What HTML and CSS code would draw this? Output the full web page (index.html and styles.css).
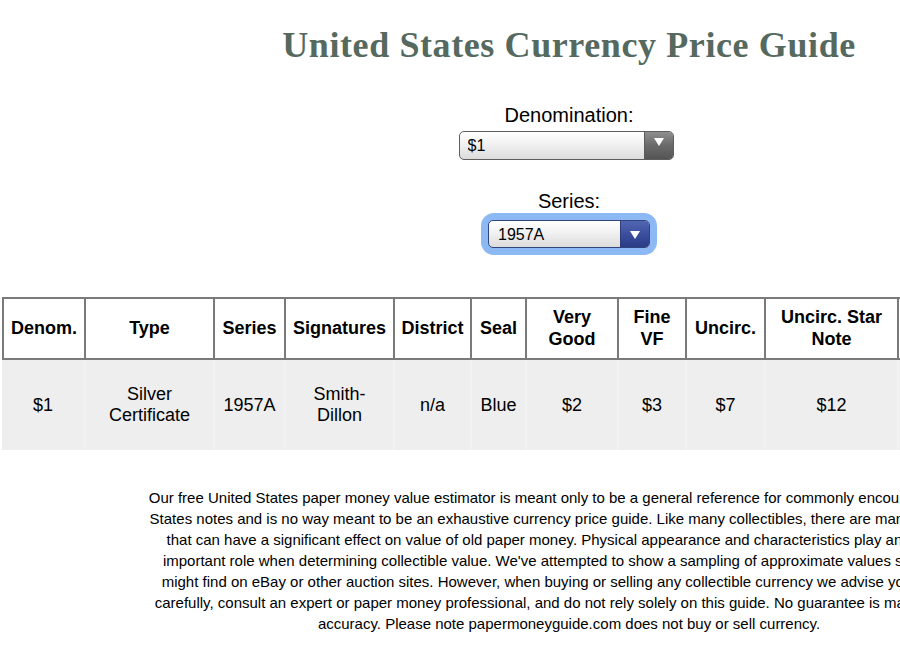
FILE: index.html
```html
<!DOCTYPE html>
<html lang="en">
<head>
<meta charset="utf-8">
<title>United States Currency Price Guide</title>
<link rel="stylesheet" href="styles.css">
</head>
<body>
<div class="page">
  <h1 class="title">United States Currency Price Guide</h1>

  <form class="filters">
    <div class="field field-first">
      <label class="field-label" for="denom">Denomination:</label>
      <div class="select select-gray">
        <select id="denom" class="select-input select-input-wide">
          <option>$1</option>
          <option>$2</option>
          <option>$5</option>
          <option>$10</option>
          <option>$20</option>
        </select>
        <span class="select-btn"><svg width="10" height="8" viewBox="0 0 10 8"><polygon points="0,0 10,0 5,8" fill="#fff"/></svg></span>
      </div>
    </div>
    <div class="field field-second">
      <label class="field-label" for="series">Series:</label>
      <div class="select select-blue">
        <select id="series" class="select-input select-input-narrow">
          <option>1957A</option>
          <option>1957</option>
          <option>1957B</option>
        </select>
        <span class="select-btn"><svg width="10" height="8" viewBox="0 0 10 8"><polygon points="0,0 10,0 5,8" fill="#fff"/></svg></span>
      </div>
    </div>
  </form>

  <table class="prices">
    <colgroup>
      <col class="c1"><col class="c2"><col class="c3"><col class="c4"><col class="c5">
      <col class="c6"><col class="c7"><col class="c8"><col class="c9"><col class="c10"><col class="c11">
    </colgroup>
    <thead>
      <tr>
        <th class="first">Denom.</th>
        <th>Type</th>
        <th>Series</th>
        <th>Signatures</th>
        <th>District</th>
        <th>Seal</th>
        <th>Very<br>Good</th>
        <th>Fine<br>VF</th>
        <th>Uncirc.</th>
        <th>Uncirc. Star<br>Note</th>
        <th></th>
      </tr>
    </thead>
    <tbody>
      <tr>
        <td>$1</td>
        <td>Silver<br>Certificate</td>
        <td>1957A</td>
        <td>Smith-<br>Dillon</td>
        <td>n/a</td>
        <td>Blue</td>
        <td>$2</td>
        <td>$3</td>
        <td>$7</td>
        <td>$12</td>
        <td></td>
      </tr>
    </tbody>
  </table>

  <p class="disclaimer">Our free United States paper money value estimator is meant only to be a general reference for commonly encountered United<br>
States notes and is no way meant to be an exhaustive currency price guide. Like many collectibles, there are many key factors<br>
that can have a significant effect on value of old paper money. Physical appearance and characteristics play an extremely<br>
important role when determining collectible value. We've attempted to show a sampling of approximate values such as you<br>
might find on eBay or other auction sites. However, when buying or selling any collectible currency we advise you to review<br>
carefully, consult an expert or paper money professional, and do not rely solely on this guide. No guarantee is made as to the<br>
accuracy. Please note papermoneyguide.com does not buy or sell currency.</p>
</div>
</body>
</html>
```

FILE: styles.css
```css
html {
  overflow-x: hidden;
}

body {
  margin: 0;
  background: #ffffff;
  color: #000000;
  font-family: "Liberation Sans", Arial, sans-serif;
}

.page {
  width: 1138px;
  text-align: center;
}

.title {
  margin: 25px 0 0;
  font-family: "Liberation Serif", "DejaVu Serif", Georgia, serif;
  font-weight: bold;
  font-size: 36px;
  letter-spacing: 0.6px;
  line-height: 40px;
  color: #55695f;
}

.filters {
  margin: 0;
}

.field {
  display: flex;
  flex-direction: column;
  align-items: center;
}

.field-first {
  margin-top: 39px;
}

.field-second {
  margin-top: 30px;
}

.field-label {
  display: block;
  font-size: 20px;
  line-height: 23px;
  margin-bottom: 4px;
}

.field-second .field-label {
  margin-bottom: 7px;
}

.select {
  position: relative;
  display: inline-block;
  border-radius: 5px;
}

.select-input {
  -webkit-appearance: none;
  appearance: none;
  display: block;
  margin: 0;
  box-sizing: border-box;
  border-radius: 5px;
  font-family: "Liberation Sans", Arial, sans-serif;
  font-size: 16px;
  color: #000;
  background: linear-gradient(#ffffff, #f1f1f1 45%, #dcdcdc);
  outline: none;
}

.select-input-wide {
  width: 215px;
  height: 29px;
  padding: 0 34px 0 8px;
  border: 1px solid #5e5e5e;
}

.select-input-narrow {
  width: 162px;
  height: 28px;
  padding: 0 34px 0 9px;
  border: 1px solid #33437e;
}

.select-gray {
  margin-right: 6px;
}

.select-blue {
  box-shadow: 0 0 0 7px #8cb8f4;
  border-radius: 6px;
}

.select-btn {
  position: absolute;
  top: 1px;
  right: 1px;
  bottom: 1px;
  width: 29px;
  display: flex;
  align-items: center;
  justify-content: center;
  border-radius: 0 4px 4px 0;
  pointer-events: none;
  box-sizing: border-box;
}

.select-gray .select-btn {
  background: linear-gradient(#8e8e8e, #6a6a6a 50%, #555555);
  border-left: 1px solid #5a5a5a;
  padding-bottom: 8px;
}

.select-blue .select-btn {
  background: linear-gradient(#5166b3, #3b4f9e 50%, #2b3c86);
  border-left: 1px solid #2f3f7c;
  padding-top: 1px;
}

.prices {
  margin: 49px auto 0;
  width: 1134px;
  table-layout: fixed;
  border-collapse: separate;
  border-spacing: 0;
  font-size: 18px;
  line-height: 22px;
}

.c1 { width: 84px; }
.c2 { width: 129px; }
.c3 { width: 71px; }
.c4 { width: 109px; }
.c5 { width: 77px; }
.c6 { width: 55px; }
.c7 { width: 92px; }
.c8 { width: 68px; }
.c9 { width: 79px; }
.c10 { width: 133px; }
.c11 { width: 237px; }

.prices th {
  font-weight: bold;
  padding: 7px 4px 8px;
  border-top: 2px solid #7a7a7a;
  border-bottom: 2px solid #7a7a7a;
  border-right: 2px solid #7a7a7a;
  vertical-align: middle;
  white-space: nowrap;
}

.prices th.first {
  border-left: 2px solid #7a7a7a;
}

.prices td {
  background: #eeeeee;
  height: 90px;
  box-sizing: border-box;
  padding: 0 4px 0;
  border-right: 2px solid #f2f2f2;
  vertical-align: middle;
  line-height: 21px;
}

.disclaimer {
  margin: 37px 0 0;
  font-size: 15px;
  line-height: 21px;
}
```
